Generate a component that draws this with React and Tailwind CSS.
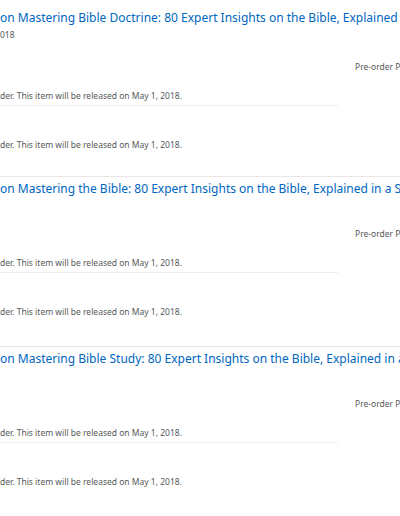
import React from 'react';

const items = [
  { title: 'on Mastering Bible Doctrine: 80 Expert Insights on the Bible, Explained in a Single Sitting', date: '018' },
  { title: 'on Mastering the Bible: 80 Expert Insights on the Bible, Explained in a Single Sitting' },
  { title: 'on Mastering Bible Study: 80 Expert Insights on the Bible, Explained in a Single Sitting' },
];

const note = 'der. This item will be released on May 1, 2018.';

const Section = ({ item, first }) => (
  <div className={first ? 'border-t border-transparent' : 'border-t border-[#e7e7e7]'}>
    <div className="pt-[4px] h-[20px] leading-[16px] text-[12px] text-[#0066c0] whitespace-nowrap">
      {item.title}
    </div>
    {item.date && (
      <div className="mt-[4px] h-[10px] leading-[10px] text-[8.5px] text-[#565959]">{item.date}</div>
    )}
    <div
      className={`${item.date ? 'mt-[21px]' : 'mt-[31px]'} h-[12px] leading-[12px] pl-[355px] text-[8.5px] text-[#565959] whitespace-nowrap`}
    >
      Pre-order Price Guarantee
    </div>
    <div className="mt-[17px] w-[338px] pb-[3px] border-b border-[#eeeeee]">
      <div className="h-[12px] leading-[12px] text-[8.5px] text-[#565959] whitespace-nowrap">{note}</div>
    </div>
    <div
      className={`mt-[33px] ${first ? 'h-[37px]' : 'h-[40px]'} leading-[12px] text-[8.5px] text-[#565959] whitespace-nowrap`}
    >
      {note}
    </div>
  </div>
);

export default function App() {
  return (
    <div
      className="w-[400px] h-[516px] overflow-hidden bg-white pt-[5px]"
      style={{ fontFamily: '"Noto Sans", "Open Sans", Arial, sans-serif' }}
    >
      {items.map((item, i) => (
        <Section key={i} item={item} first={i === 0} />
      ))}
    </div>
  );
}
